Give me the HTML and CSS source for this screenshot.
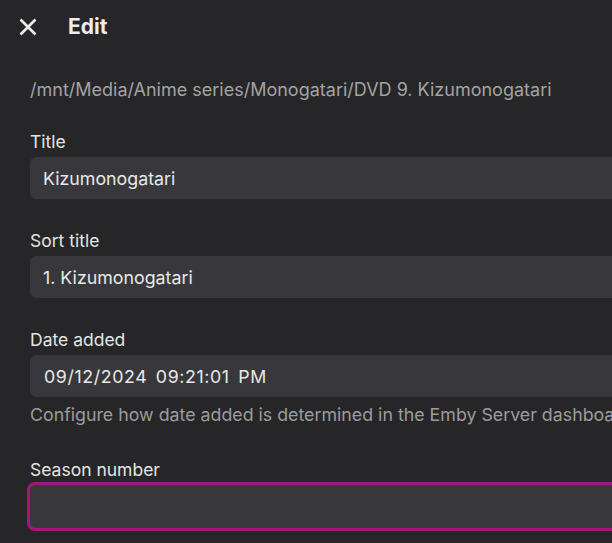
FILE: index.html
```html
<!DOCTYPE html>
<html lang="en">
<head>
<meta charset="utf-8">
<title>Edit</title>
<link rel="stylesheet" href="styles.css">
</head>
<body>
<header class="topbar">
  <button class="close-btn" aria-label="Close">
    <svg width="20" height="20" viewBox="0 0 20 20" aria-hidden="true">
      <path d="M2.5 2.5 L17.5 17.5 M17.5 2.5 L2.5 17.5" stroke="#ececec" stroke-width="2.6" stroke-linecap="butt" fill="none"/>
    </svg>
  </button>
  <h1 class="title">Edit</h1>
</header>
<main class="content">
  <div class="path">/mnt/Media/Anime series/Monogatari/DVD 9. Kizumonogatari</div>
  <div class="field">
    <label class="label">Title</label>
    <div class="input">Kizumonogatari</div>
  </div>
  <div class="field">
    <label class="label">Sort title</label>
    <div class="input">1. Kizumonogatari</div>
  </div>
  <div class="field">
    <label class="label">Date added</label>
    <div class="input date">09/12/2024 09:21:01 PM</div>
    <div class="help">Configure how date added is determined in the Emby Server dashboard</div>
  </div>
  <div class="field season">
    <label class="label">Season number</label>
    <div class="input focused"></div>
  </div>
</main>
</body>
</html>
```
FILE: styles.css
```css
html, body {
  margin: 0;
  padding: 0;
  background: #262628;
  overflow: hidden;
  font-family: Inter, "Noto Sans", "Liberation Sans", sans-serif;
  color: #e6e6e6;
}

.topbar {
  display: flex;
  align-items: center;
  height: 54px;
  padding-left: 18px;
}

.close-btn {
  display: flex;
  align-items: center;
  justify-content: center;
  width: 20px;
  height: 20px;
  padding: 0;
  margin: 0;
  background: none;
  border: 0;
}

.title {
  margin: 0 0 0 30px;
  font-size: 21px;
  font-weight: 700;
  line-height: 24px;
  color: #ececec;
}

.content {
  width: 760px;
  padding: 0 0 0 30px;
}

.path {
  margin-top: 26px;
  font-size: 18px;
  line-height: 20px;
  color: #a3a3a3;
  white-space: nowrap;
}

.field {
  margin-top: 32px;
}

.label {
  display: block;
  font-size: 17.5px;
  line-height: 20px;
  margin-bottom: 5px;
  color: #e4e4e4;
}

.input {
  box-sizing: border-box;
  height: 42px;
  width: 720px;
  background: #38383c;
  border-radius: 6px;
  padding: 0 13px;
  display: flex;
  align-items: center;
  font-size: 17.8px;
  color: #e8e8e8;
  white-space: nowrap;
}

.input.date {
  padding-left: 14px;
  word-spacing: 3px;
  letter-spacing: 0.6px;
}

.help {
  margin-top: 8px;
  font-size: 17.8px;
  line-height: 20px;
  color: #9c9c9c;
  white-space: nowrap;
}

.field.season {
  margin-top: 35px;
}

.season .label {
  margin-bottom: 2px;
}

.input.focused {
  height: 49px;
  margin-left: -3px;
  border: 3px solid #a1177c;
  border-radius: 8px;
}
```
